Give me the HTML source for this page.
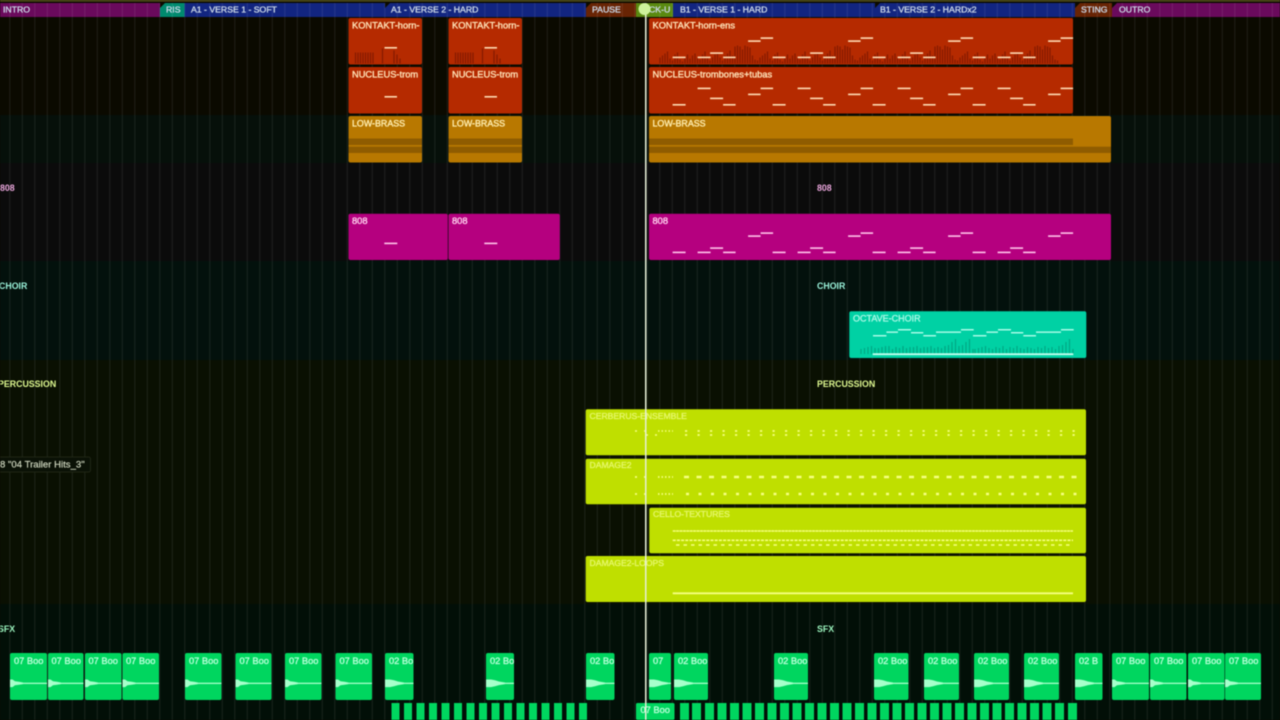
<!DOCTYPE html>
<html lang="en">
<head>
<meta charset="utf-8">
<title>Arrangement</title>
<style>
html,body{margin:0;padding:0;width:1280px;height:720px;overflow:hidden;background:#0c0b00}
svg{display:block;filter:blur(.45px)}
text{font-family:"Liberation Sans",sans-serif;font-size:9.3px;stroke-width:.35px;paint-order:stroke}
.m text{fill:#c9d6e6;stroke:#c9d6e6;font-size:8.7px}
.r{fill:#ffe3b8;stroke:#ffe3b8}
.a{fill:#ffeeb0;stroke:#ffeeb0;font-size:8.9px}
.a text{font-size:8.9px}
.p{fill:#ffd0ee;stroke:#ffd0ee}
.l{fill:#e6f76a;stroke:#e6f76a}
.l text{font-size:8.6px}
.g{fill:#b8ffd8;stroke:#b8ffd8}
.h{font-weight:bold;font-size:8.8px;stroke-width:0}
</style>
</head>
<body>
<svg width="1280" height="720" viewBox="0 0 1280 720" xmlns="http://www.w3.org/2000/svg">
<defs>
<pattern id="grid" x="9.3" y="0" width="12.5" height="720" patternUnits="userSpaceOnUse"><rect width="1" height="720" fill="#fff" fill-opacity=".085"/></pattern>
<g id="vel" fill="none" stroke="#841a00" stroke-width="1.2"><path d="M0 0v-6M2.5 0v-8M5 0v-10M7.5 0v-12M10 0v-5M12.5 0v-3M15 0v-9M17.5 0v-11M20 0v-4M22.5 0v-2M25 0v-7M27.500 0v-9M30 0v-5M32.500 0v-8M35 0v-10M37.500 0v-6M40 0v-4M42.500 0v-9M45 0v-12M47.500 0v-7M50 0v-3M52.500 0v-6M55 0v-9M57.500 0v-11M60 0v-6M62.500 0v-3M65 0v-8M67.500 0v-10M70 0v-13M72.500 0v-8M75 0v-17M77.500 0v-18M80 0v-17M82.500 0v-14M85 0v-18M87.500 0v-17M90 0v-16M92.500 0v-8M95 0v-4M97.500 0v-3"/></g>
<g id="kn" fill="#ffdcb4"><rect x="0" y="0" width="13" height="1.6"/><rect x="25" y="0" width="13" height="1.6"/><rect x="37.5" y="-4.3" width="13" height="1.6"/><rect x="50.5" y="0" width="12.5" height="1.6"/><rect x="75.5" y="-16.3" width="12.5" height="1.6"/><rect x="88" y="-19.3" width="12.5" height="1.6"/></g>
<g id="nn" fill="#ffdcb4"><rect x="0" y="16.4" width="13" height="1.6"/><rect x="25" y="0" width="13" height="1.6"/><rect x="37.5" y="10" width="13" height="1.6"/><rect x="50.5" y="16.4" width="12.5" height="1.6"/><rect x="75.5" y="6" width="12.5" height="1.6"/><rect x="88" y="0" width="12.5" height="1.6"/></g>
<g id="pn" fill="#ffc4ea"><rect x="0" y="0" width="13" height="1.6"/><rect x="25" y="0" width="13" height="1.6"/><rect x="37.5" y="-4.3" width="13" height="1.6"/><rect x="50.5" y="0" width="12.5" height="1.6"/><rect x="75.5" y="-16.3" width="12.5" height="1.6"/><rect x="88" y="-19.3" width="12.5" height="1.6"/></g>
<g id="cn" fill="#a8fbe6"><rect x="0" y="6" width="13.4" height="1.5"/><rect x="13.4" y="2.4" width="11.6" height="1.5"/><rect x="25" y="0" width="13" height="1.5"/><rect x="38" y="3" width="12.3" height="1.5"/><rect x="50.3" y="6" width="12.7" height="1.5"/><rect x="63" y="2.4" width="25" height="1.5"/><rect x="88" y="0" width="12.7" height="1.5"/></g>
<path id="cv" fill="none" stroke="#00a884" stroke-width="1.2" d="M0 0v-5M3.5 0v-6M7 0v-7M10.5 0v-8M14 0v-6M17.5 0v-5M21 0v-7M24.5 0v-6M28 0v-8M31.5 0v-5M35 0v-7M38.5 0v-6M42 0v-8M45.5 0v-6M49 0v-5M52.5 0v-7M56 0v-6M59.5 0v-5M63 0v-7M66.5 0v-6M70 0v-8M73.5 0v-6M77 0v-7M80.5 0v-5M84 0v-8M87.5 0v-9M91 0v-12M94.5 0v-15M98 0v-5"/>
<path id="w7" fill="#a6ffcb" d="M0-3.8 H2.500 L5-2 L9-1.500 L13-.8 V.8 L9 1.500 L5 2 L2.500 3.800 H0Z"/>
<path id="w2" fill="#a6ffcb" d="M0-3.800 H5 L9-3 L13-1.800 L19-.8 V.8 L13 1.800 L9 3 L5 3.800 H0Z"/>
</defs>

<!-- rows -->
<rect x="0" y="0" width="1280" height="115" fill="#0b0a00"/>
<rect x="0" y="115" width="1280" height="48" fill="#06100a"/>
<rect x="0" y="163" width="1280" height="98" fill="#0b0b0b"/>
<rect x="0" y="261" width="1280" height="99" fill="#03110c"/>
<rect x="0" y="360" width="1280" height="244" fill="#0a1002"/>
<rect x="0" y="604" width="1280" height="116" fill="#020f07"/>

<!-- ruler -->
<rect x="0" y="0" width="1280" height="1.6" fill="#57561c"/>
<rect x="0" y="1.6" width="1280" height="1.6" fill="#0c0b00"/>

<!-- markers -->
<g>
<rect x="0" y="3" width="160" height="14" fill="#6a0a5c"/>
<rect x="160" y="3" width="25" height="14" fill="#008a6e"/>
<rect x="184.500" y="3" width="201" height="14" fill="#122580"/>
<rect x="385" y="3" width="201" height="14" fill="#122580"/>
<rect x="586" y="3" width="50" height="14" fill="#682404"/>
<rect x="636" y="3" width="37.500" height="14" fill="#5a8a10"/>
<rect x="673" y="3" width="202" height="14" fill="#122580"/>
<rect x="875" y="3" width="200" height="14" fill="#122580"/>
<rect x="1075" y="3" width="37" height="14" fill="#682404"/>
<rect x="1112" y="3" width="168" height="14" fill="#6a0a5c"/>
</g>
<path fill="#0c0b00" d="M160 3h5l-5 5zM385 3h5l-5 5zM586 3h5l-5 5zM875 3h5l-5 5zM1075 3h5l-5 5zM1112 3h5l-5 5z"/>
<g class="m">
<text x="3" y="12.500">INTRO</text>
<text x="166" y="12.500">RIS</text>
<text x="191" y="12.500">A1 - VERSE 1 - SOFT</text>
<text x="391" y="12.500">A1 - VERSE 2 - HARD</text>
<text x="592" y="12.500">PAUSE</text>
<text x="649" y="12.500">CK-U</text>
<text x="680" y="12.500">B1 - VERSE 1 - HARD</text>
<text x="880" y="12.500">B1 - VERSE 2 - HARDx2</text>
<text x="1081" y="12.500">STING</text>
<text x="1119" y="12.500">OUTRO</text>
</g>

<!-- grid -->
<rect x="0" y="3" width="1280" height="717" fill="url(#grid)"/>

<!-- section labels -->
<g>
<text x="0" y="191" fill="#eaa6dc" class="h">808</text>
<text x="817" y="191" fill="#eaa6dc" class="h">808</text>
<text x="-1" y="289" fill="#9af2da" class="h">CHOIR</text>
<text x="817" y="289" fill="#9af2da" class="h">CHOIR</text>
<text x="-2" y="387" fill="#def890" class="h">PERCUSSION</text>
<text x="817" y="387" fill="#def890" class="h">PERCUSSION</text>
<text x="-2" y="632" fill="#9af2bc" class="h">SFX</text>
<text x="817" y="632" fill="#9af2bc" class="h">SFX</text>
</g>

<!-- brass red -->
<g fill="#b52a00">
<rect x="348.500" y="18" width="73.500" height="46.500" rx="2"/>
<rect x="448.500" y="18" width="73.500" height="46.500" rx="2"/>
<rect x="649" y="18" width="424" height="46.500" rx="2"/>
<rect x="348.500" y="67" width="73.500" height="46.500" rx="2"/>
<rect x="448.500" y="67" width="73.500" height="46.500" rx="2"/>
<rect x="649" y="67" width="424" height="46.500" rx="2"/>
</g>
<g fill="none" stroke="#841a00" stroke-width="1.200"><path d="M355.500 63.500v-11M358 63.500v-11M360.500 63.500v-11M363 63.500v-11M365.500 63.500v-11M368 63.500v-11M370.500 63.500v-11M373 63.500v-11M382.500 63.500v-15M394 63.500v-13M397 63.500v-9M400 63.500v-5M455.500 63.500v-11M458 63.500v-11M460.500 63.500v-11M463 63.500v-11M465.500 63.500v-11M468 63.500v-11M470.500 63.500v-11M473 63.500v-11M482.500 63.500v-15M494 63.500v-13M497 63.500v-9M500 63.500v-5"/></g>
<use href="#vel" x="660" y="63.500"/><use href="#vel" x="760" y="63.500"/><use href="#vel" x="860" y="63.500"/><use href="#vel" x="960" y="63.500"/>
<g fill="#ffdcb4">
<rect x="384.500" y="47" width="12.500" height="1.600"/><rect x="484.500" y="47" width="12.500" height="1.600"/>
<rect x="384.500" y="96" width="12.500" height="1.600"/><rect x="484.500" y="96" width="12.500" height="1.600"/>
</g>
<use href="#kn" x="672.600" y="56.600"/><use href="#kn" x="772.600" y="56.600"/><use href="#kn" x="872.600" y="56.600"/><use href="#kn" x="972.600" y="56.600"/>
<use href="#nn" x="672.600" y="87.600"/><use href="#nn" x="772.600" y="87.600"/><use href="#nn" x="872.600" y="87.600"/><use href="#nn" x="972.600" y="87.600"/>
<g class="r">
<text x="352" y="28.500">KONTAKT-horn-</text>
<text x="452" y="28.500">KONTAKT-horn-</text>
<text x="652.500" y="28.500">KONTAKT-horn-ens</text>
<text x="352" y="77.500">NUCLEUS-trom</text>
<text x="452" y="77.500">NUCLEUS-trom</text>
<text x="652.500" y="77.500">NUCLEUS-trombones+tubas</text>
</g>

<!-- low brass -->
<g fill="#b87800">
<rect x="348.500" y="116" width="73.500" height="46.500" rx="2"/>
<rect x="448.500" y="116" width="73.500" height="46.500" rx="2"/>
<rect x="649" y="116" width="462" height="46.500" rx="2"/>
</g>
<g fill="#8f5c00">
<rect x="348.500" y="138.500" width="73.500" height="6.500"/><rect x="348.500" y="146.700" width="73.500" height="6.300"/>
<rect x="448.500" y="138.500" width="73.500" height="6.500"/><rect x="448.500" y="146.700" width="73.500" height="6.300"/>
<rect x="649" y="138.500" width="424" height="6.500"/><rect x="649" y="146.700" width="462" height="6.300"/>
</g>
<g class="a">
<text x="352" y="126.500">LOW-BRASS</text>
<text x="452" y="126.500">LOW-BRASS</text>
<text x="652.500" y="126.500">LOW-BRASS</text>
</g>

<!-- 808 -->
<g fill="#b5007f">
<rect x="348.500" y="213.700" width="99.300" height="46.300" rx="2"/>
<rect x="448.500" y="213.700" width="111.300" height="46.300" rx="2"/>
<rect x="649" y="213.700" width="462" height="46.300" rx="2"/>
</g>
<g fill="#ffc4ea"><rect x="384.300" y="242.600" width="13" height="1.600"/><rect x="484.300" y="242.600" width="13" height="1.600"/></g>
<use href="#pn" x="672.600" y="251.600"/><use href="#pn" x="772.600" y="251.600"/><use href="#pn" x="872.600" y="251.600"/><use href="#pn" x="972.600" y="251.600"/>
<g class="p">
<text x="352" y="224">808</text><text x="452" y="224">808</text><text x="652.500" y="224">808</text>
</g>

<!-- choir -->
<rect x="849.300" y="311.300" width="237" height="46.700" rx="2" fill="#00d1a4"/>
<use href="#cv" x="861" y="354"/><use href="#cv" x="875" y="354"/><use href="#cv" x="975" y="354"/>
<use href="#cn" x="873" y="329"/><use href="#cn" x="973" y="329"/>
<rect x="872.700" y="353.300" width="200.600" height="1.800" fill="#c6fff0"/>
<text x="853" y="321.500" fill="#a6f7e4" stroke="#a6f7e4" style="font-size:9px">OCTAVE-CHOIR</text>

<!-- percussion -->
<g fill="#bfdf00">
<rect x="585.700" y="409.300" width="500.300" height="46" rx="2"/>
<rect x="585.700" y="458.700" width="500.300" height="45.600" rx="2"/>
<rect x="649.300" y="507.700" width="436.700" height="45.600" rx="2"/>
<rect x="585.700" y="556" width="500.300" height="46" rx="2"/>
</g>
<g fill="none" stroke="#f6ff80">
<path stroke-width="1.800" stroke-dasharray="2.200 10.300" d="M685 431H1080M685 435H1080"/>
<path stroke-width="1.600" stroke-dasharray="1.500 2" d="M658 431H673"/>
<path stroke-width="1.600" stroke-dasharray="2 7" d="M635 431H652M646 435H662"/>
<path stroke-width="2.400" stroke-dasharray="5 7.500" d="M684 477H1080"/>
<path stroke-width="2.400" stroke-dasharray="3 9.500" d="M686 494H1080"/>
<path stroke-width="1.800" stroke-dasharray="1.500 2" d="M658 477H673M658 494H673"/>
<path stroke-width="1.800" stroke-dasharray="2 7" d="M635 477H652M635 494H652"/>
<path stroke-width="1.600" stroke-dasharray="3 .4" d="M672.700 531H1073"/>
<path stroke-width="1.600" stroke-dasharray="3 1.200" d="M672.700 540.300H1073"/>
<path stroke-width="1.600" stroke-dasharray="3.500 4" d="M676 545H1073"/>
<path stroke-width="1.800" d="M672.700 593.300H1073"/>
</g>
<g class="l">
<text x="589.500" y="419">CERBERUS-ENSEMBLE</text>
<text x="589.500" y="468">DAMAGE2</text>
<text x="653" y="517">CELLO-TEXTURES</text>
<text x="589.500" y="566">DAMAGE2-LOOPS</text>
</g>

<!-- tooltip -->
<rect x="-2" y="457" width="92.500" height="15" rx="2" fill="#0a1106" stroke="#262c1a" stroke-width=".8"/>
<text x="0" y="467.500" fill="#d4dcc4" stroke="#d4dcc4" style="font-size:9.600px;stroke-width:.15px">8 "04 Trailer Hits_3"</text>

<!-- sfx clips -->
<g fill="#00d65f">
<rect x="10" y="653" width="37" height="47" rx="2"/><rect x="48" y="653" width="35.500" height="47" rx="2"/><rect x="85" y="653" width="36.500" height="47" rx="2"/><rect x="122.500" y="653" width="36.500" height="47" rx="2"/>
<rect x="185" y="653" width="36.500" height="47" rx="2"/><rect x="235.500" y="653" width="36" height="47" rx="2"/><rect x="285" y="653" width="36.500" height="47" rx="2"/><rect x="335.500" y="653" width="36.500" height="47" rx="2"/>
<rect x="385" y="653" width="28.500" height="47" rx="2"/><rect x="486" y="653" width="28" height="47" rx="2"/><rect x="586" y="653" width="28.500" height="47" rx="2"/>
<rect x="649" y="653" width="22" height="47" rx="2"/><rect x="674" y="653" width="34" height="47" rx="2"/><rect x="774" y="653" width="34" height="47" rx="2"/><rect x="874" y="653" width="34.500" height="47" rx="2"/><rect x="924" y="653" width="35" height="47" rx="2"/><rect x="974" y="653" width="35" height="47" rx="2"/><rect x="1024" y="653" width="35" height="47" rx="2"/><rect x="1075" y="653" width="27.500" height="47" rx="2"/>
<rect x="1112" y="653" width="37" height="47" rx="2"/><rect x="1150" y="653" width="36.500" height="47" rx="2"/><rect x="1188" y="653" width="36.500" height="47" rx="2"/><rect x="1225" y="653" width="36" height="47" rx="2"/>
</g>
<g fill="#a6ffcb">
<rect x="10" y="682.700" width="37" height="1.300"/><rect x="48" y="682.700" width="35.500" height="1.300"/><rect x="85" y="682.700" width="36.500" height="1.300"/><rect x="122.500" y="682.700" width="36.500" height="1.300"/>
<rect x="185" y="682.700" width="36.500" height="1.300"/><rect x="235.500" y="682.700" width="36" height="1.300"/><rect x="285" y="682.700" width="36.500" height="1.300"/><rect x="335.500" y="682.700" width="36.500" height="1.300"/>
<rect x="385" y="682.700" width="28.500" height="1.300"/><rect x="486" y="682.700" width="28" height="1.300"/><rect x="586" y="682.700" width="28.500" height="1.300"/>
<rect x="649" y="682.700" width="22" height="1.300"/><rect x="674" y="682.700" width="34" height="1.300"/><rect x="774" y="682.700" width="34" height="1.300"/><rect x="874" y="682.700" width="34.500" height="1.300"/><rect x="924" y="682.700" width="35" height="1.300"/><rect x="974" y="682.700" width="35" height="1.300"/><rect x="1024" y="682.700" width="35" height="1.300"/><rect x="1075" y="682.700" width="27.500" height="1.300"/>
<rect x="1112" y="682.700" width="37" height="1.300"/><rect x="1150" y="682.700" width="36.500" height="1.300"/><rect x="1188" y="682.700" width="36.500" height="1.300"/><rect x="1225" y="682.700" width="36" height="1.300"/>
</g>
<use href="#w7" x="10" y="683.300"/><use href="#w7" x="48" y="683.300"/><use href="#w7" x="85" y="683.300"/><use href="#w7" x="122.500" y="683.300"/><use href="#w7" x="185" y="683.300"/><use href="#w7" x="235.500" y="683.300"/><use href="#w7" x="285" y="683.300"/><use href="#w7" x="335.500" y="683.300"/>
<use href="#w2" x="385" y="683.300"/><use href="#w2" x="486" y="683.300"/><use href="#w2" x="586" y="683.300"/><use href="#w2" x="649" y="683.300"/><use href="#w2" x="674" y="683.300"/><use href="#w2" x="774" y="683.300"/><use href="#w2" x="874" y="683.300"/><use href="#w2" x="924" y="683.300"/><use href="#w2" x="974" y="683.300"/><use href="#w2" x="1024" y="683.300"/><use href="#w2" x="1075" y="683.300"/>
<use href="#w7" x="1112" y="683.300"/><use href="#w7" x="1150" y="683.300"/><use href="#w7" x="1188" y="683.300"/><use href="#w7" x="1225" y="683.300"/>
<g class="g">
<text x="14" y="664">07 Boo</text><text x="51.500" y="664">07 Boo</text><text x="88.500" y="664">07 Boo</text><text x="126" y="664">07 Boo</text>
<text x="189" y="664">07 Boo</text><text x="239.500" y="664">07 Boo</text><text x="289" y="664">07 Boo</text><text x="339.500" y="664">07 Boo</text>
<text x="389" y="664">02 Bo</text><text x="490" y="664">02 Bo</text><text x="590" y="664">02 Bo</text>
<text x="653" y="664">07</text><text x="678" y="664">02 Boo</text><text x="778" y="664">02 Boo</text><text x="878" y="664">02 Boo</text><text x="928" y="664">02 Boo</text><text x="978" y="664">02 Boo</text><text x="1028" y="664">02 Boo</text><text x="1079" y="664">02 B</text>
<text x="1116" y="664">07 Boo</text><text x="1154" y="664">07 Boo</text><text x="1192" y="664">07 Boo</text><text x="1229" y="664">07 Boo</text>
</g>

<!-- bottom strip -->
<g fill="#00d65f">
<rect x="391.500" y="703" width="8" height="17"/><rect x="404" y="703" width="8" height="17"/><rect x="416.500" y="703" width="8" height="17"/><rect x="429" y="703" width="8" height="17"/><rect x="441.500" y="703" width="8" height="17"/><rect x="454" y="703" width="8" height="17"/><rect x="466.500" y="703" width="8" height="17"/><rect x="479" y="703" width="8" height="17"/><rect x="491.500" y="703" width="8" height="17"/><rect x="504" y="703" width="8" height="17"/><rect x="516.500" y="703" width="8" height="17"/><rect x="529" y="703" width="8" height="17"/><rect x="541.500" y="703" width="8" height="17"/><rect x="554" y="703" width="8" height="17"/><rect x="566.500" y="703" width="8" height="17"/><rect x="579" y="703" width="8" height="17"/>
<rect x="636" y="703" width="38.500" height="17" rx="1.500"/>
<rect x="680" y="703" width="9" height="17"/><rect x="692" y="703" width="9" height="17"/><rect x="705" y="703" width="9" height="17"/><rect x="717.500" y="703" width="9" height="17"/><rect x="730" y="703" width="9" height="17"/><rect x="742.500" y="703" width="9" height="17"/><rect x="755" y="703" width="9" height="17"/><rect x="767.500" y="703" width="9" height="17"/><rect x="780" y="703" width="9" height="17"/><rect x="792.500" y="703" width="9" height="17"/><rect x="805" y="703" width="9" height="17"/><rect x="817.500" y="703" width="9" height="17"/><rect x="830" y="703" width="9" height="17"/><rect x="842.500" y="703" width="9" height="17"/><rect x="855" y="703" width="9" height="17"/><rect x="867.500" y="703" width="9" height="17"/><rect x="880" y="703" width="9" height="17"/><rect x="892.500" y="703" width="9" height="17"/><rect x="905" y="703" width="9" height="17"/><rect x="917.500" y="703" width="9" height="17"/><rect x="930" y="703" width="9" height="17"/><rect x="942.500" y="703" width="9" height="17"/><rect x="955" y="703" width="9" height="17"/><rect x="967.500" y="703" width="9" height="17"/><rect x="980" y="703" width="9" height="17"/><rect x="992.500" y="703" width="9" height="17"/><rect x="1005" y="703" width="9" height="17"/><rect x="1017.500" y="703" width="9" height="17"/><rect x="1030" y="703" width="9" height="17"/><rect x="1042.500" y="703" width="9" height="17"/><rect x="1055" y="703" width="9" height="17"/><rect x="1068" y="703" width="9" height="17"/>
</g>
<text x="640.500" y="713" class="g">07 Boo</text>

<!-- playhead -->
<rect x="645" y="3" width="1.500" height="717" fill="#e6efd6"/>
<circle cx="644.500" cy="9" r="6" fill="#cdf29a"/>
</svg>
</body>
</html>
